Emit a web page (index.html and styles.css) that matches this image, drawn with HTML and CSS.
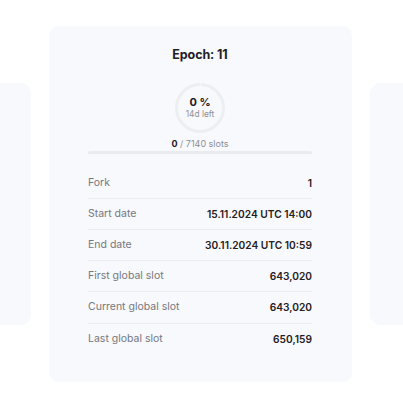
FILE: index.html
```html
<!DOCTYPE html>
<html>
<head>
<meta charset="utf-8">
<link rel="stylesheet" href="styles.css">
</head>
<body>
<div class="track">
  <div class="card side"></div>
  <div class="card main">
    <div class="title">Epoch: 11</div>
    <div class="ring">
      <svg class="ring-svg" width="50" height="50" viewBox="0 0 50 50">
        <circle cx="25" cy="25" r="23.5" fill="none" stroke="#eceef2" stroke-width="3" stroke-dasharray="145.6 2" stroke-dashoffset="-1" transform="rotate(-90 25 25)"/>
      </svg>
      <div class="ring-text">
        <div class="pct">0 %</div>
        <div class="left">14d left</div>
      </div>
    </div>
    <div class="slots"><b>0</b> / 7140 slots</div>
    <div class="bar"><div class="bar-fill" style="width:0%"></div></div>
    <div class="rows">
      <div class="row"><span class="label">Fork</span><span class="value">1</span></div>
      <div class="row"><span class="label">Start date</span><span class="value">15.11.2024 UTC 14:00</span></div>
      <div class="row"><span class="label">End date</span><span class="value">30.11.2024 UTC 10:59</span></div>
      <div class="row"><span class="label">First global slot</span><span class="value">643,020</span></div>
      <div class="row"><span class="label">Current global slot</span><span class="value">643,020</span></div>
      <div class="row"><span class="label">Last global slot</span><span class="value">650,159</span></div>
    </div>
  </div>
  <div class="card side"></div>
</div>
</body>
</html>
```
FILE: styles.css
```css
* { box-sizing: border-box; }
html, body { margin: 0; padding: 0; background: #ffffff; }
body {
  font-family: Inter, "Noto Sans", sans-serif;
  color: #1f2023;
  width: 403px;
  height: 403px;
  overflow: hidden;
}
.track {
  display: flex;
  justify-content: center;
  align-items: center;
  gap: 18px;
  width: 403px;
  height: 408px;
  padding-right: 2px;
  overflow: hidden;
}
.card {
  flex: 0 0 303px;
  width: 303px;
  background: #f8f9fc;
  border-radius: 10px;
}
.side { height: 242px; }
.main {
  height: 356px;
  padding: 20px 40px 0 39px;
  display: flex;
  flex-direction: column;
  align-items: stretch;
}
.title {
  text-align: center;
  font-size: 12.5px;
  font-weight: 700;
  line-height: 18px;
  letter-spacing: -0.1px;
}
.ring {
  position: relative;
  width: 50px;
  height: 50px;
  margin: 19px auto 0;
}
.ring-svg { display: block; }
.ring-text {
  position: absolute;
  inset: 0;
  display: flex;
  flex-direction: column;
  align-items: center;
  justify-content: center;
  padding-bottom: 2px;
}
.pct {
  font-size: 11px;
  font-weight: 700;
  line-height: 13px;
}
.left {
  font-size: 8.3px;
  color: #8c8f96;
  line-height: 10px;
}
.slots {
  margin-top: 5px;
  text-align: center;
  font-size: 9px;
  line-height: 12px;
  color: #8c8f96;
}
.slots b { color: #1f2023; font-weight: 700; }
.bar {
  margin-top: 1px;
  height: 2.5px;
  background: #e9ebef;
  border-radius: 2px;
}
.bar-fill { height: 100%; background: #1f2023; }
.rows { margin-top: 14px; }
.row {
  display: flex;
  justify-content: space-between;
  align-items: center;
  padding: 8px 0;
  line-height: 14.2px;
  border-bottom: 1px solid #eaecf0;
  font-size: 10.5px;
}
.row:last-child { border-bottom: none; }
.label { color: #75787f; }
.value { font-weight: 600; color: #1f2023; font-size: 10.2px; }
```
